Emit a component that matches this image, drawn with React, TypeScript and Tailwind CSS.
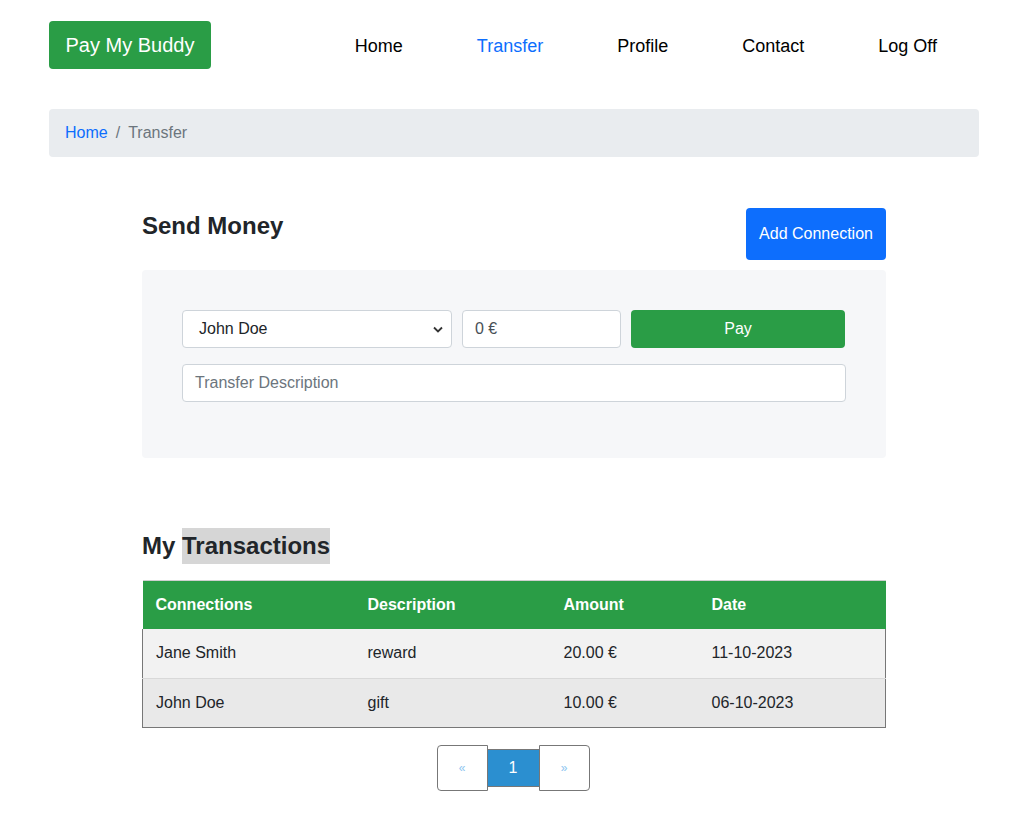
const transactions = [
  { connection: 'Jane Smith', description: 'reward', amount: '20.00 €', date: '11-10-2023' },
  { connection: 'John Doe', description: 'gift', amount: '10.00 €', date: '06-10-2023' },
]

const navLinks = ['Home', 'Transfer', 'Profile', 'Contact', 'Log Off']

export default function App() {
  return (
    <div className="min-h-[820px] bg-white text-[#212529] font-['Liberation_Sans',Arial,sans-serif]">
      <div className="ml-[49px] w-[930px]">
        {/* header */}
        <div className="flex items-center justify-between pt-[21px]">
          <div className="h-[48px] w-[162px] rounded-[4px] bg-[#2a9d46] text-white text-[20px] flex items-center justify-center">
            Pay My Buddy
          </div>
          <nav className="flex items-center gap-[74px] mr-[42px] mt-[2px] text-[18px]">
            {navLinks.map(link => (
              <a
                key={link}
                className={link === 'Transfer' ? 'text-[#0d6efd]' : 'text-black'}
              >
                {link}
              </a>
            ))}
          </nav>
        </div>

        {/* breadcrumb */}
        <div className="mt-[40px] h-[48px] rounded-[4px] bg-[#e9ecef] flex items-center px-[16px] text-[16px]">
          <a className="text-[#0d6efd]">Home</a>
          <span className="px-[8px] text-[#6c757d]">/</span>
          <span className="text-[#6c757d]">Transfer</span>
        </div>

        <div className="ml-[93px] w-[744px]">
          {/* send money */}
          <div className="mt-[51px] flex items-start justify-between">
            <h2 className="mt-[3px] text-[24px] font-bold leading-[29px]">Send Money</h2>
            <button className="h-[52px] w-[140px] rounded-[4px] bg-[#0d6efd] text-white text-[16px]">
              Add Connection
            </button>
          </div>

          <div className="mt-[10px] rounded-[4px] bg-[#f6f7f9] px-[40px] pt-[40px] pb-[56px]">
            <div className="flex gap-[10px]">
              <div className="relative w-[270px] h-[38px] rounded-[4px] border border-[#ced4da] bg-white flex items-center pl-[16px] text-[16px] text-[#212529]">
                John Doe
                <svg
                  className="absolute right-[8px] top-[15px]"
                  width="10"
                  height="7"
                  viewBox="0 0 10 7"
                  fill="none"
                  stroke="#333"
                  strokeWidth="1.8"
                >
                  <path d="M1 1.5l4 4 4-4" />
                </svg>
              </div>
              <div className="w-[159px] h-[38px] rounded-[4px] border border-[#ced4da] bg-white flex items-center pl-[12px] text-[16px] text-[#495057]">
                0 €
              </div>
              <button className="w-[214px] h-[38px] rounded-[4px] bg-[#2a9d46] text-white text-[16px]">
                Pay
              </button>
            </div>
            <div className="mt-[16px] w-[664px] h-[38px] rounded-[4px] border border-[#ced4da] bg-white flex items-center pl-[12px] text-[16px] text-[#6c757d]">
              Transfer Description
            </div>
          </div>

          {/* transactions */}
          <h2 className="mt-[70px] text-[24px] font-bold leading-[36px]">
            My <span className="inline-block bg-[#d6d6d6]">Transactions</span>
          </h2>

          <table className="mt-[16px] w-[744px] border-collapse text-[16px] text-left">
            <thead>
              <tr className="h-[48px] bg-[#2a9d46] text-white border-t border-[#d0d0d0]">
                <th className="w-[212px] pl-[13px] font-bold">Connections</th>
                <th className="w-[196px] pl-[13px] font-bold">Description</th>
                <th className="w-[148px] pl-[13px] font-bold">Amount</th>
                <th className="pl-[13px] font-bold">Date</th>
              </tr>
            </thead>
            <tbody>
              {transactions.map((t, i) => (
                <tr
                  key={t.connection}
                  className={`border-x border-[#777] ${
                    i === 0
                      ? 'h-[50px] bg-[#f2f2f2] border-b border-b-[#d9d9d9]'
                      : 'h-[49px] bg-[#e9e9e9] border-b border-b-[#777]'
                  }`}
                >
                  <td className="pl-[13px]">{t.connection}</td>
                  <td className="pl-[13px]">{t.description}</td>
                  <td className="pl-[13px]">{t.amount}</td>
                  <td className="pl-[13px]">{t.date}</td>
                </tr>
              ))}
            </tbody>
          </table>

          {/* pagination */}
          <div className="mt-[17px] flex items-center justify-center pr-[2px]">
            <div className="w-[51px] h-[46px] rounded-l-[4px] border border-[#777] bg-white flex items-center justify-center text-[12px] text-[#8ec5f0]">
              «
            </div>
            <div className="w-[51px] h-[38px] border-y border-[#777] bg-[#2b8fd0] flex items-center justify-center text-[16px] text-white">
              1
            </div>
            <div className="w-[51px] h-[46px] rounded-r-[4px] border border-[#777] bg-white flex items-center justify-center text-[12px] text-[#8ec5f0]">
              »
            </div>
          </div>
        </div>
      </div>
    </div>
  )
}
